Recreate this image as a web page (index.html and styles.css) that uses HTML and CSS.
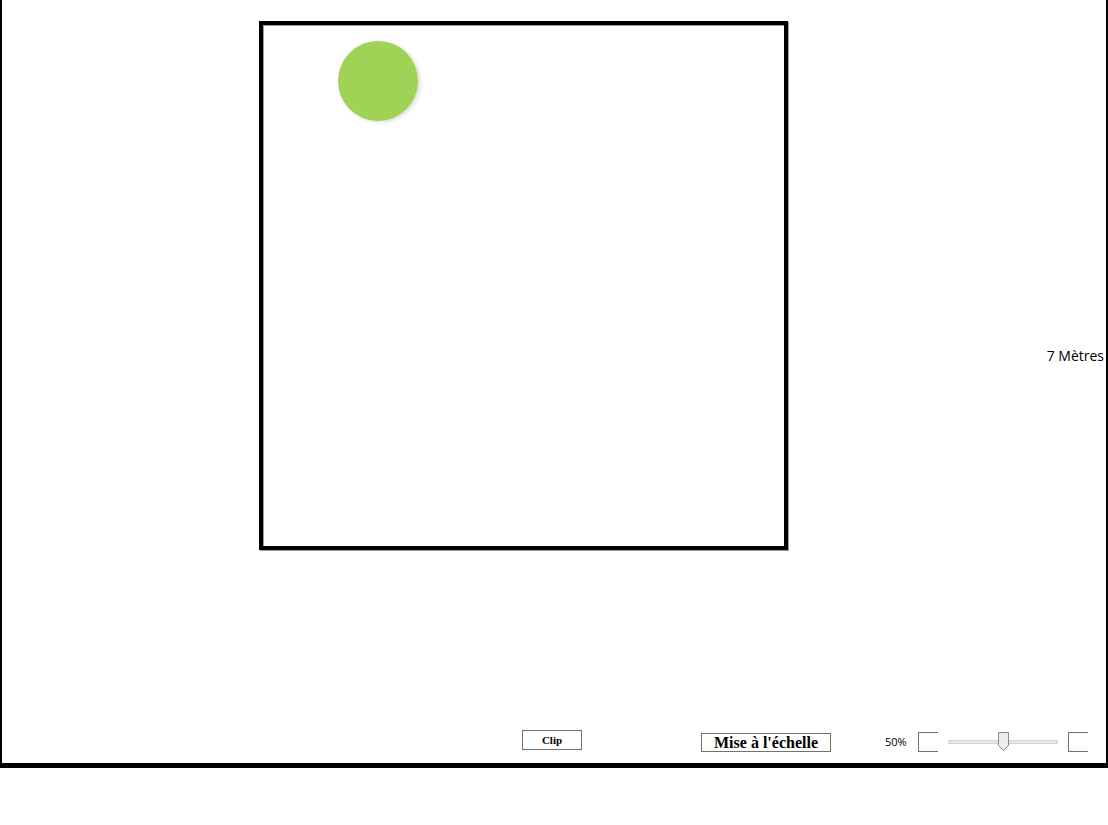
FILE: index.html
```html
<!DOCTYPE html>
<html lang="fr">
<head>
<meta charset="utf-8">
<title>Mise à l'échelle</title>
<link rel="stylesheet" href="styles.css">
</head>
<body>
<div class="frame">
  <div class="stage">
    <div class="square">
      <div class="dot"></div>
    </div>
    <div class="measure">7 Mètres</div>
  </div>
  <div class="bar">
    <button class="btn-clip">Clip</button>
    <button class="btn-scale">Mise à l'échelle</button>
    <span class="pct">50%</span>
    <span class="box"></span>
    <div class="slider">
      <div class="track"></div>
      <svg class="thumb" width="11" height="19" viewBox="0 0 11 19">
        <path d="M0.5 0.5 H10.5 V13.5 L5.5 18.5 L0.5 13.5 Z" fill="#ececec" stroke="#8a8a8a" stroke-width="1"/>
      </svg>
    </div>
    <span class="box"></span>
  </div>
</div>
</body>
</html>
```
FILE: styles.css
```css
html, body {
  margin: 0;
  padding: 0;
  background: #fff;
}
.frame {
  width: 1108px;
  height: 768px;
  box-sizing: border-box;
  border-left: 2px solid #000;
  border-right: 2px solid #000;
  border-bottom: 5px solid #000;
  display: flex;
  flex-direction: column;
}
.stage {
  height: 725px;
  display: flex;
  align-items: flex-start;
}
.square {
  margin-left: 257px;
  margin-top: 21px;
  width: 529px;
  height: 529px;
  box-sizing: border-box;
  border: 4px solid #000;
  box-shadow: inset 1px 1px 0 #a0a0a0, 1px 1px 0 #a0a0a0;
  padding-left: 75px;
  padding-top: 16px;
}
.dot {
  width: 80px;
  height: 80px;
  border-radius: 50%;
  background: #a0d255;
  box-shadow: 2px 1px 4px rgba(0, 0, 0, 0.16);
}
.measure {
  margin-left: auto;
  margin-top: 346px;
  margin-right: 2px;
  font-family: "Open Sans", "Noto Sans", sans-serif;
  font-size: 14px;
  line-height: 20px;
  color: #000;
  white-space: nowrap;
}
.bar {
  height: 38px;
  display: flex;
  align-items: flex-start;
}
.btn-clip {
  margin-left: 520px;
  margin-top: 5px;
  width: 60px;
  height: 20px;
  box-sizing: border-box;
  border: 1px solid #707070;
  background: #fff;
  padding: 0;
  font-family: "Liberation Serif", serif;
  font-weight: bold;
  font-size: 11px;
  color: #000;
}
.btn-scale {
  margin-left: 119px;
  margin-top: 8px;
  width: 130px;
  height: 19px;
  box-sizing: border-box;
  border: 1px solid #707070;
  background: #fff;
  padding: 0;
  font-family: "Liberation Serif", serif;
  font-weight: bold;
  font-size: 16px;
  line-height: 16px;
  color: #000;
}
.pct {
  margin-left: 54px;
  margin-top: 10px;
  font-family: "Open Sans", "Noto Sans", sans-serif;
  font-size: 11px;
  line-height: 14px;
  color: #000;
  width: 22px;
}
.box {
  margin-left: 11px;
  margin-top: 7px;
  width: 20px;
  height: 20px;
  box-sizing: border-box;
  border: 1px solid #707070;
  border-right: none;
}
.slider {
  margin-left: 10px;
  margin-top: 7px;
  width: 110px;
  height: 20px;
  position: relative;
  display: flex;
  align-items: center;
}
.track {
  width: 110px;
  height: 4px;
  box-sizing: border-box;
  background: #e7e7e7;
  border: 1px solid #d6d6d6;
}
.thumb {
  position: absolute;
  left: 50px;
  top: 0;
}
.slider + .box {
  margin-left: 10px;
}
```
